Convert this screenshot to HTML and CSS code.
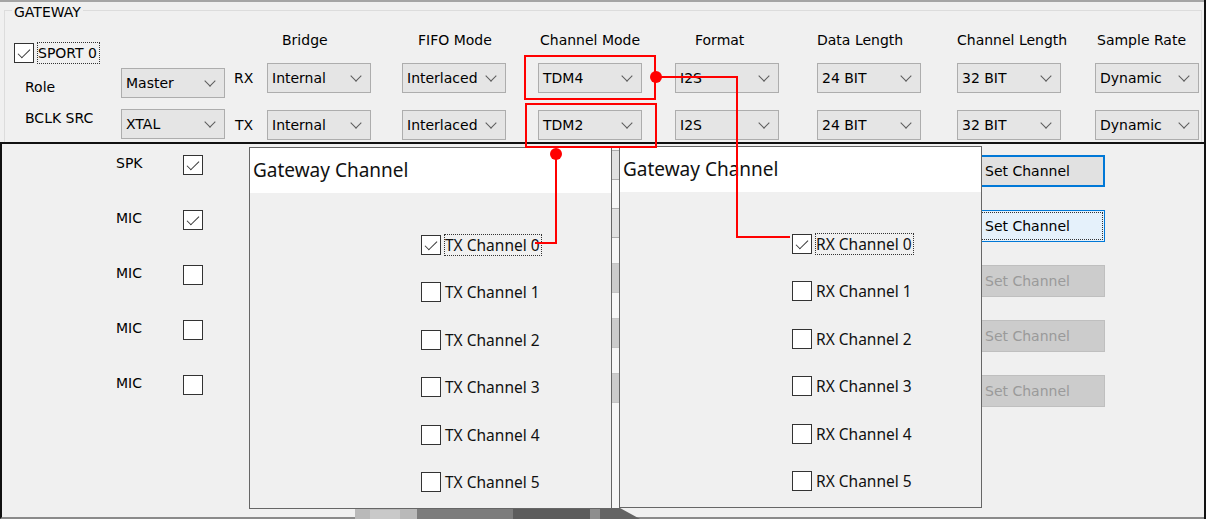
FILE: index.html
```html
<!DOCTYPE html>
<html lang="en">
<head>
    <meta charset="UTF-8">
    <title>Gateway</title>
    <link rel="stylesheet" href="styles.css">
</head>
<body>
<div class="screen">
    <section class="gateway">
        <div class="groupbox">
            <span class="legend">GATEWAY</span>
            <div class="gw-body">
                <div class="sport">
                    <div class="sport-check">
                        <span class="box on"></span>
                        <span class="focus">SPORT 0</span>
                    </div>
                    <div class="sport-grid">
                        <span class="lbl-role">Role</span>
                        <div class="combo">Master</div>
                        <span class="lbl-bclk">BCLK SRC</span>
                        <div class="combo">XTAL</div>
                    </div>
                </div>
                <div class="bus">
                    <span></span>
                    <span class="hd hd-bridge">Bridge</span>
                    <span class="hd hd-fifo">FIFO Mode</span>
                    <span class="hd hd-mode">Channel Mode</span>
                    <span class="hd hd-format">Format</span>
                    <span class="hd">Data Length</span>
                    <span class="hd">Channel Length</span>
                    <span class="hd hd-rate">Sample Rate</span>

                    <span class="dir">RX</span>
                    <div class="combo">Internal</div>
                    <div class="combo">Interlaced</div>
                    <div class="combo">TDM4</div>
                    <div class="combo">I2S</div>
                    <div class="combo">24 BIT</div>
                    <div class="combo">32 BIT</div>
                    <div class="combo">Dynamic</div>

                    <span class="dir dir-tx">TX</span>
                    <div class="combo">Internal</div>
                    <div class="combo">Interlaced</div>
                    <div class="combo">TDM2</div>
                    <div class="combo">I2S</div>
                    <div class="combo">24 BIT</div>
                    <div class="combo">32 BIT</div>
                    <div class="combo">Dynamic</div>
                </div>
            </div>
        </div>
    </section>

    <section class="channels">
        <div class="ch-row">
            <span>SPK</span><span class="box on"></span><span></span>
            <div class="set-btn default">Set Channel</div>
        </div>
        <div class="ch-row">
            <span>MIC</span><span class="box on"></span><span></span>
            <div class="set-btn active"><span class="btn-focus">Set Channel</span></div>
        </div>
        <div class="ch-row">
            <span>MIC</span><span class="box"></span><span></span>
            <div class="set-btn off">Set Channel</div>
        </div>
        <div class="ch-row">
            <span>MIC</span><span class="box"></span><span></span>
            <div class="set-btn off">Set Channel</div>
        </div>
        <div class="ch-row">
            <span>MIC</span><span class="box"></span><span></span>
            <div class="set-btn off">Set Channel</div>
        </div>
    </section>

    <!-- bits of the window underneath the two popups -->
    <div class="peek">
        <span class="peek-blk"></span>
        <span class="peek-blk"></span>
        <span class="peek-blk dim"></span>
        <span class="peek-blk dim"></span>
        <span class="peek-blk dim"></span>
    </div>
    <svg class="blob" width="300" height="11" viewBox="0 0 300 11">
        <rect x="15" y="0" width="62" height="11" fill="#b9b9b9"/>
        <rect x="30" y="2" width="30" height="9" fill="#c9c9c9"/>
        <rect x="77" y="0" width="96" height="11" fill="#7c7c7c"/>
        <rect x="173" y="0" width="77" height="11" fill="#5c5c5c"/>
        <rect x="250" y="0" width="10" height="11" fill="#8e8e8e"/>
        <polygon points="260,0 280,0 300,11 260,11" fill="#646464"/>
    </svg>

    <div class="dialog dialog-tx">
        <div class="dialog-title">Gateway Channel</div>
        <div class="dialog-body">
            <div class="opt"><span class="box on"></span><span class="opt-text focus">TX Channel 0</span></div>
            <div class="opt"><span class="box"></span><span class="opt-text">TX Channel 1</span></div>
            <div class="opt"><span class="box"></span><span class="opt-text">TX Channel 2</span></div>
            <div class="opt"><span class="box"></span><span class="opt-text">TX Channel 3</span></div>
            <div class="opt"><span class="box"></span><span class="opt-text">TX Channel 4</span></div>
            <div class="opt"><span class="box"></span><span class="opt-text">TX Channel 5</span></div>
        </div>
    </div>

    <div class="dialog dialog-rx">
        <div class="dialog-title">Gateway Channel</div>
        <div class="dialog-body">
            <div class="opt"><span class="box on"></span><span class="opt-text focus">RX Channel 0</span></div>
            <div class="opt"><span class="box"></span><span class="opt-text">RX Channel 1</span></div>
            <div class="opt"><span class="box"></span><span class="opt-text">RX Channel 2</span></div>
            <div class="opt"><span class="box"></span><span class="opt-text">RX Channel 3</span></div>
            <div class="opt"><span class="box"></span><span class="opt-text">RX Channel 4</span></div>
            <div class="opt"><span class="box"></span><span class="opt-text">RX Channel 5</span></div>
        </div>
    </div>

    <!-- red call-outs -->
    <svg class="marks" width="1206" height="519" viewBox="0 0 1206 519">
        <g fill="none" stroke="#ff0000" stroke-width="2">
            <rect x="525" y="56" width="130" height="43"/>
            <rect x="526" y="104" width="130" height="43"/>
            <polyline points="655,77 737,77 737,237 790,237"/>
            <polyline points="556,153 556,243 535,243"/>
        </g>
        <circle cx="656" cy="77" r="6" fill="#ff0000"/>
        <circle cx="556" cy="154" r="6" fill="#ff0000"/>
    </svg>
</div>
</body>
</html>
```

FILE: styles.css
```css
* {
    box-sizing: border-box;
}
body {
    margin: 0;
    font-family: "DejaVu Sans", Tahoma, sans-serif;
    font-size: 14px;
    color: #000;
    background: #fff;
}
.screen {
    position: relative;
    width: 1206px;
    height: 519px;
    overflow: hidden;
    background: #f0f0f0;
    border-right: 2px solid #111;
}

/* top panel */
.gateway {
    height: 144px;
    border-top: 2px solid #a5a5a5;
    border-bottom: 2px solid #111;
    padding: 8px 2px 0 4px;
}
.groupbox {
    height: 100%;
    border: 1px solid #dcdcdc;
    border-bottom: 0;
}
.legend {
    display: block;
    width: max-content;
    margin: -7px 0 0 7px;
    padding: 0 2px;
    line-height: 16px;
    background: #f0f0f0;
}
.gw-body {
    display: flex;
}
.sport {
    width: 229px;
    padding-left: 9px;
}
.sport-check {
    display: flex;
    align-items: center;
    gap: 3px;
    height: 22px;
    margin-top: 22px;
}
.focus {
    border: 1px dotted #333;
    line-height: 20px;
    padding-right: 2px;
}
.sport-grid {
    display: grid;
    grid-template-columns: 96px 104px;
    grid-auto-rows: 30px;
    row-gap: 11px;
    margin: 4px 0 0 11px;
    line-height: 16px;
}
.lbl-role {
    padding-top: 11px;
}
.lbl-bclk {
    padding-top: 1px;
}
.bus {
    display: grid;
    grid-template-columns: 33px 135px 136px 137px 142px 140px 138px 105px;
    grid-template-rows: 16px 45px 47px;
    align-items: end;
    margin-top: 12px;
}
.hd {
    line-height: 16px;
}
.hd-bridge { padding-left: 15px; }
.hd-fifo { padding-left: 16px; }
.hd-mode { padding-left: 2px; }
.hd-format { padding-left: 20px; }
.hd-rate { padding-left: 2px; }
.dir {
    line-height: 30px;
}
.dir-tx {
    padding-left: 1px;
}
.combo {
    display: flex;
    align-items: center;
    justify-content: space-between;
    width: 104px;
    height: 30px;
    padding-left: 4px;
    background: #e5e5e5;
    border: 1px solid #adadad;
    line-height: 16px;
}
.combo::after {
    content: "";
    width: 7px;
    height: 7px;
    margin: -4px 10px 0 0;
    border-right: 1px solid #5c5c5c;
    border-bottom: 1px solid #5c5c5c;
    transform: rotate(45deg);
}

/* checkbox */
.box {
    display: flex;
    align-items: center;
    justify-content: center;
    width: 20px;
    height: 20px;
    border: 1px solid #333;
    background: #fff;
}
.box.on::after {
    content: "";
    width: 11px;
    height: 5px;
    margin-top: -3px;
    border-left: 1.5px solid #333;
    border-bottom: 1.5px solid #333;
    transform: rotate(-45deg);
}

/* lower panel */
.channels {
    height: 375px;
    border-left: 2px solid #111;
    border-bottom: 2px solid #8a8a8a;
    padding: 11px 99px 0 114px;
}
.ch-row {
    display: grid;
    grid-template-columns: 67px 20px 1fr 155px;
    align-items: start;
    height: 55px;
    line-height: 16px;
}
.set-btn {
    display: flex;
    align-items: center;
    justify-content: center;
    height: 32px;
    border: 1px solid #adadad;
    background: #e1e1e1;
}
.set-btn.default {
    border: 2px solid #0078d7;
}
.set-btn.active {
    border-color: #0078d7;
    background: #e5f1fb;
    padding: 1px;
}
.btn-focus {
    flex: 1;
    align-self: stretch;
    display: flex;
    align-items: center;
    justify-content: center;
    border: 1px dotted #333;
}
.set-btn.off {
    background: #cccccc;
    border-color: #bfbfbf;
    color: #9a9a9a;
}

.peek {
    position: absolute;
    left: 611px;
    top: 147px;
    width: 9px;
    height: 362px;
    display: flex;
    flex-direction: column;
    gap: 25px;
    padding-top: 3px;
    background: #f7f7f7;
    border-left: 1px solid #c8c8c8;
}
.peek-blk {
    height: 30px;
    background: #e1e1e1;
    border-top: 1px solid #adadad;
    border-bottom: 1px solid #adadad;
}
.peek-blk:nth-child(2) {
    margin-top: 3px;
}
.peek-blk.dim {
    background: #cccccc;
    border-color: #c4c4c4;
}
.blob {
    position: absolute;
    left: 340px;
    top: 508px;
}

/* popups */
.dialog {
    position: absolute;
    top: 147px;
    width: 363px;
    height: 362px;
    border: 1px solid #666;
    background: #f0f0f0;
    font-family: "Noto Sans", "Open Sans", sans-serif;
    color: #111;
}
.dialog-tx {
    left: 249px;
}
.dialog-rx {
    left: 619px;
    top: 146px;
}
.dialog-title {
    height: 45px;
    padding-left: 3px;
    background: #fff;
    font-size: 19px;
    line-height: 45px;
}
.dialog-body {
    padding: 41px 0 0 171px;
}
.dialog-rx .dialog-body {
    padding-left: 172px;
}
.opt {
    display: flex;
    align-items: center;
    gap: 3px;
    height: 22px;
    margin-bottom: 25.4px;
}
.opt-text {
    font-size: 15.5px;
    line-height: 20px;
    border: 1px solid transparent;
    padding-right: 1px;
}
.opt-text.focus {
    border: 1px dotted #333;
}

.marks {
    position: absolute;
    left: 0;
    top: 0;
    pointer-events: none;
}
```
